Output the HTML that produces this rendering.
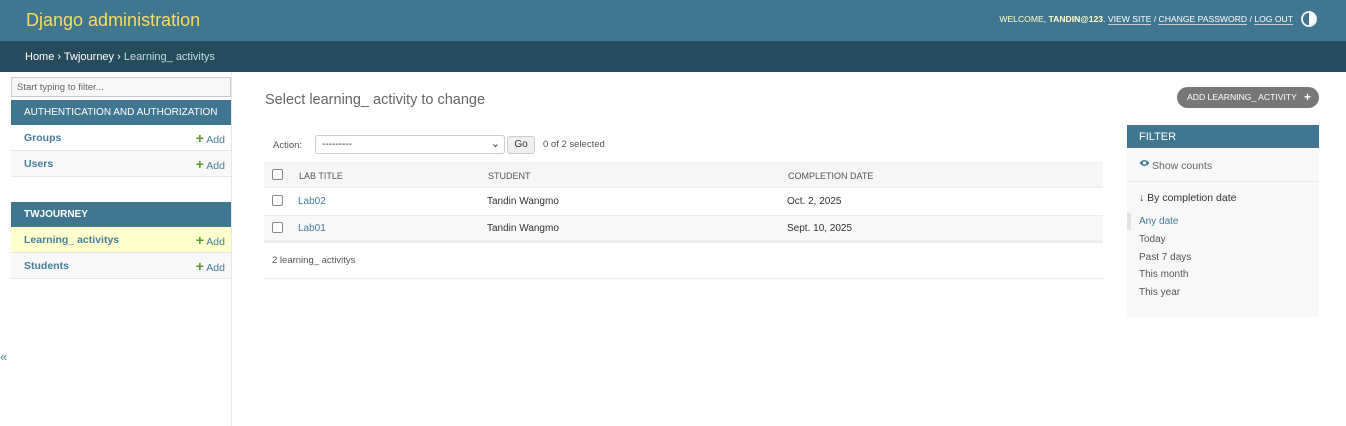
<!DOCTYPE html>
<html><head><meta charset="utf-8"><style>
*{box-sizing:border-box;margin:0;padding:0}
body{width:1346px;height:426px;overflow:hidden;background:#fff;font-family:"Liberation Sans",sans-serif;font-size:11px;color:#333;position:relative}
.a{position:absolute;white-space:nowrap}
a{color:#447e9b;text-decoration:none}
.cb{position:absolute;width:11px;height:11px;border:1px solid #888;border-radius:2px;background:#fff}
.row{position:absolute;left:11px;width:220px;height:26px;border-bottom:1px solid #e8e8e8;padding:0 13px;line-height:26px;font-weight:bold;color:#447e9b;font-size:10.5px;white-space:nowrap}
.add{position:absolute;right:6px;top:0;font-weight:normal;color:#447e9b}
.add b{color:#5b9a27;font-size:14px}
.cap{position:absolute;left:11px;width:220px;background:#417690;color:#fff;font-size:10px;padding:0 13px;line-height:25px;white-space:nowrap}
.th{position:absolute;top:171px;font-size:9px;color:#555}
.td{position:absolute;font-size:10px;color:#333}
.fl{position:absolute;left:1139px;font-size:10px;color:#555}
</style></head><body>
<div class="a" style="left:0;top:0;width:1346px;height:41px;background:#417690"></div>
<div class="a" style="left:26px;top:10px;font-size:18px;color:#f5dd5d">Django administration</div>
<div class="a" style="right:53px;top:14px;font-size:8.6px;color:#ffc">WELCOME, <b>TANDIN@123</b>. <span style="border-bottom:1px solid #ccc;color:#fff">VIEW SITE</span> / <span style="border-bottom:1px solid #ccc;color:#fff">CHANGE PASSWORD</span> / <span style="border-bottom:1px solid #ccc;color:#fff">LOG OUT</span></div>
<svg class="a" style="left:1301px;top:11px" width="16" height="16"><circle cx="8" cy="8" r="7" fill="none" stroke="#fff" stroke-width="1.8"/><path d="M8 1a7 7 0 0 1 0 14z" fill="#fff"/></svg>
<div class="a" style="left:0;top:41px;width:1346px;height:31px;background:#264b5d"></div>
<div class="a" style="left:25px;top:51px;font-size:11px;color:#fff">Home › Twjourney › <span style="color:#c4dce8">Learning_ activitys</span></div>

<div class="a" style="left:231px;top:72px;width:1px;height:354px;background:#e8e8e8"></div>
<div class="a" style="left:11px;top:77px;width:220px;height:20px;border:1px solid #ccc;background:#f8f8f8;font-size:9.5px;color:#666;padding:4px 5px">Start typing to filter...</div>
<div class="cap" style="top:100px">AUTHENTICATION AND AUTHORIZATION</div>
<div class="row" style="top:125px;background:#fff">Groups<span class="add"><b>+</b> Add</span></div>
<div class="row" style="top:151px;background:#f8f8f8">Users<span class="add"><b>+</b> Add</span></div>
<div class="cap" style="top:202px;font-weight:bold">TWJOURNEY</div>
<div class="row" style="top:227px;background:#ffc">Learning_ activitys<span class="add"><b>+</b> Add</span></div>
<div class="row" style="top:253px;background:#f8f8f8">Students<span class="add"><b>+</b> Add</span></div>
<div class="a" style="left:0;top:349px;color:#447e9b;font-size:13px">«</div>

<div class="a" style="left:265px;top:92px;font-size:14.5px;color:#666">Select learning_ activity to change</div>
<div class="a" style="left:1177px;top:87px;width:142px;height:21px;border-radius:11px;background:#777;color:#fff;font-size:8.6px;line-height:21px;padding-left:10px">ADD LEARNING_ ACTIVITY <b style="font-size:12px;position:absolute;right:8px">+</b></div>

<div class="a" style="left:273px;top:140px;font-size:9.5px;color:#555">Action:</div>
<div class="a" style="left:315px;top:135px;width:190px;height:19px;border:1px solid #ccc;border-radius:3px;font-size:10px;padding:3px 6px;color:#333">---------<span style="position:absolute;right:4px;top:1px;font-size:11px">⌄</span></div>
<div class="a" style="left:507px;top:136px;width:28px;height:18px;border:1px solid #ccc;border-radius:3px;background:#f0f0f0;font-size:10px;text-align:center;line-height:16px">Go</div>
<div class="a" style="left:543px;top:139px;font-size:9.5px;color:#555">0 of 2 selected</div>

<div class="a" style="left:264px;top:162px;width:839px;height:26px;background:#f6f6f6;border-top:1px solid #eee;border-bottom:1px solid #eee"></div>
<div class="a" style="left:264px;top:215px;width:839px;height:28px;background:#f8f8f8;border-top:1px solid #eee;border-bottom:3px solid #eee"></div>
<div class="a" style="left:264px;top:278px;width:839px;height:1px;background:#eee"></div>
<div class="cb" style="left:272px;top:169px"></div>
<div class="cb" style="left:272px;top:195px"></div>
<div class="cb" style="left:272px;top:222px"></div>
<div class="th" style="left:299px">LAB TITLE</div>
<div class="th" style="left:488px">STUDENT</div>
<div class="th" style="left:788px">COMPLETION DATE</div>
<div class="td" style="left:298px;top:196px"><a>Lab02</a></div>
<div class="td" style="left:487px;top:196px">Tandin Wangmo</div>
<div class="td" style="left:787px;top:196px">Oct. 2, 2025</div>
<div class="td" style="left:298px;top:223px"><a>Lab01</a></div>
<div class="td" style="left:487px;top:223px">Tandin Wangmo</div>
<div class="td" style="left:787px;top:223px">Sept. 10, 2025</div>
<div class="a" style="left:272px;top:255px;font-size:9.5px;color:#555">2 learning_ activitys</div>

<div class="a" style="left:1127px;top:125px;width:192px;height:192px;background:#f8f8f8"></div>
<div class="a" style="left:1127px;top:125px;width:192px;height:23px;background:#417690;color:#fff;font-size:11px;line-height:24px;padding-left:12px">FILTER</div>
<svg class="a" style="left:1139px;top:159px" width="11" height="8"><path d="M0.5 4Q5.5-2 10.5 4Q5.5 10 0.5 4z" fill="#447e9b"/><circle cx="5.5" cy="4" r="1.6" fill="#fff"/></svg>
<div class="a" style="left:1152px;top:160px;font-size:10.5px;color:#666">Show counts</div>
<div class="a" style="left:1127px;top:181px;width:192px;height:1px;background:#e8e8e8"></div>
<div class="a" style="left:1139px;top:192px;font-size:10.5px;color:#333">↓ By completion date</div>
<div class="a" style="left:1127px;top:213px;width:4px;height:17px;background:#e4e4e4"></div>
<div class="fl" style="top:216px;color:#447e9b">Any date</div>
<div class="fl" style="top:234px">Today</div>
<div class="fl" style="top:252px">Past 7 days</div>
<div class="fl" style="top:269px">This month</div>
<div class="fl" style="top:287px">This year</div>
</body></html>
